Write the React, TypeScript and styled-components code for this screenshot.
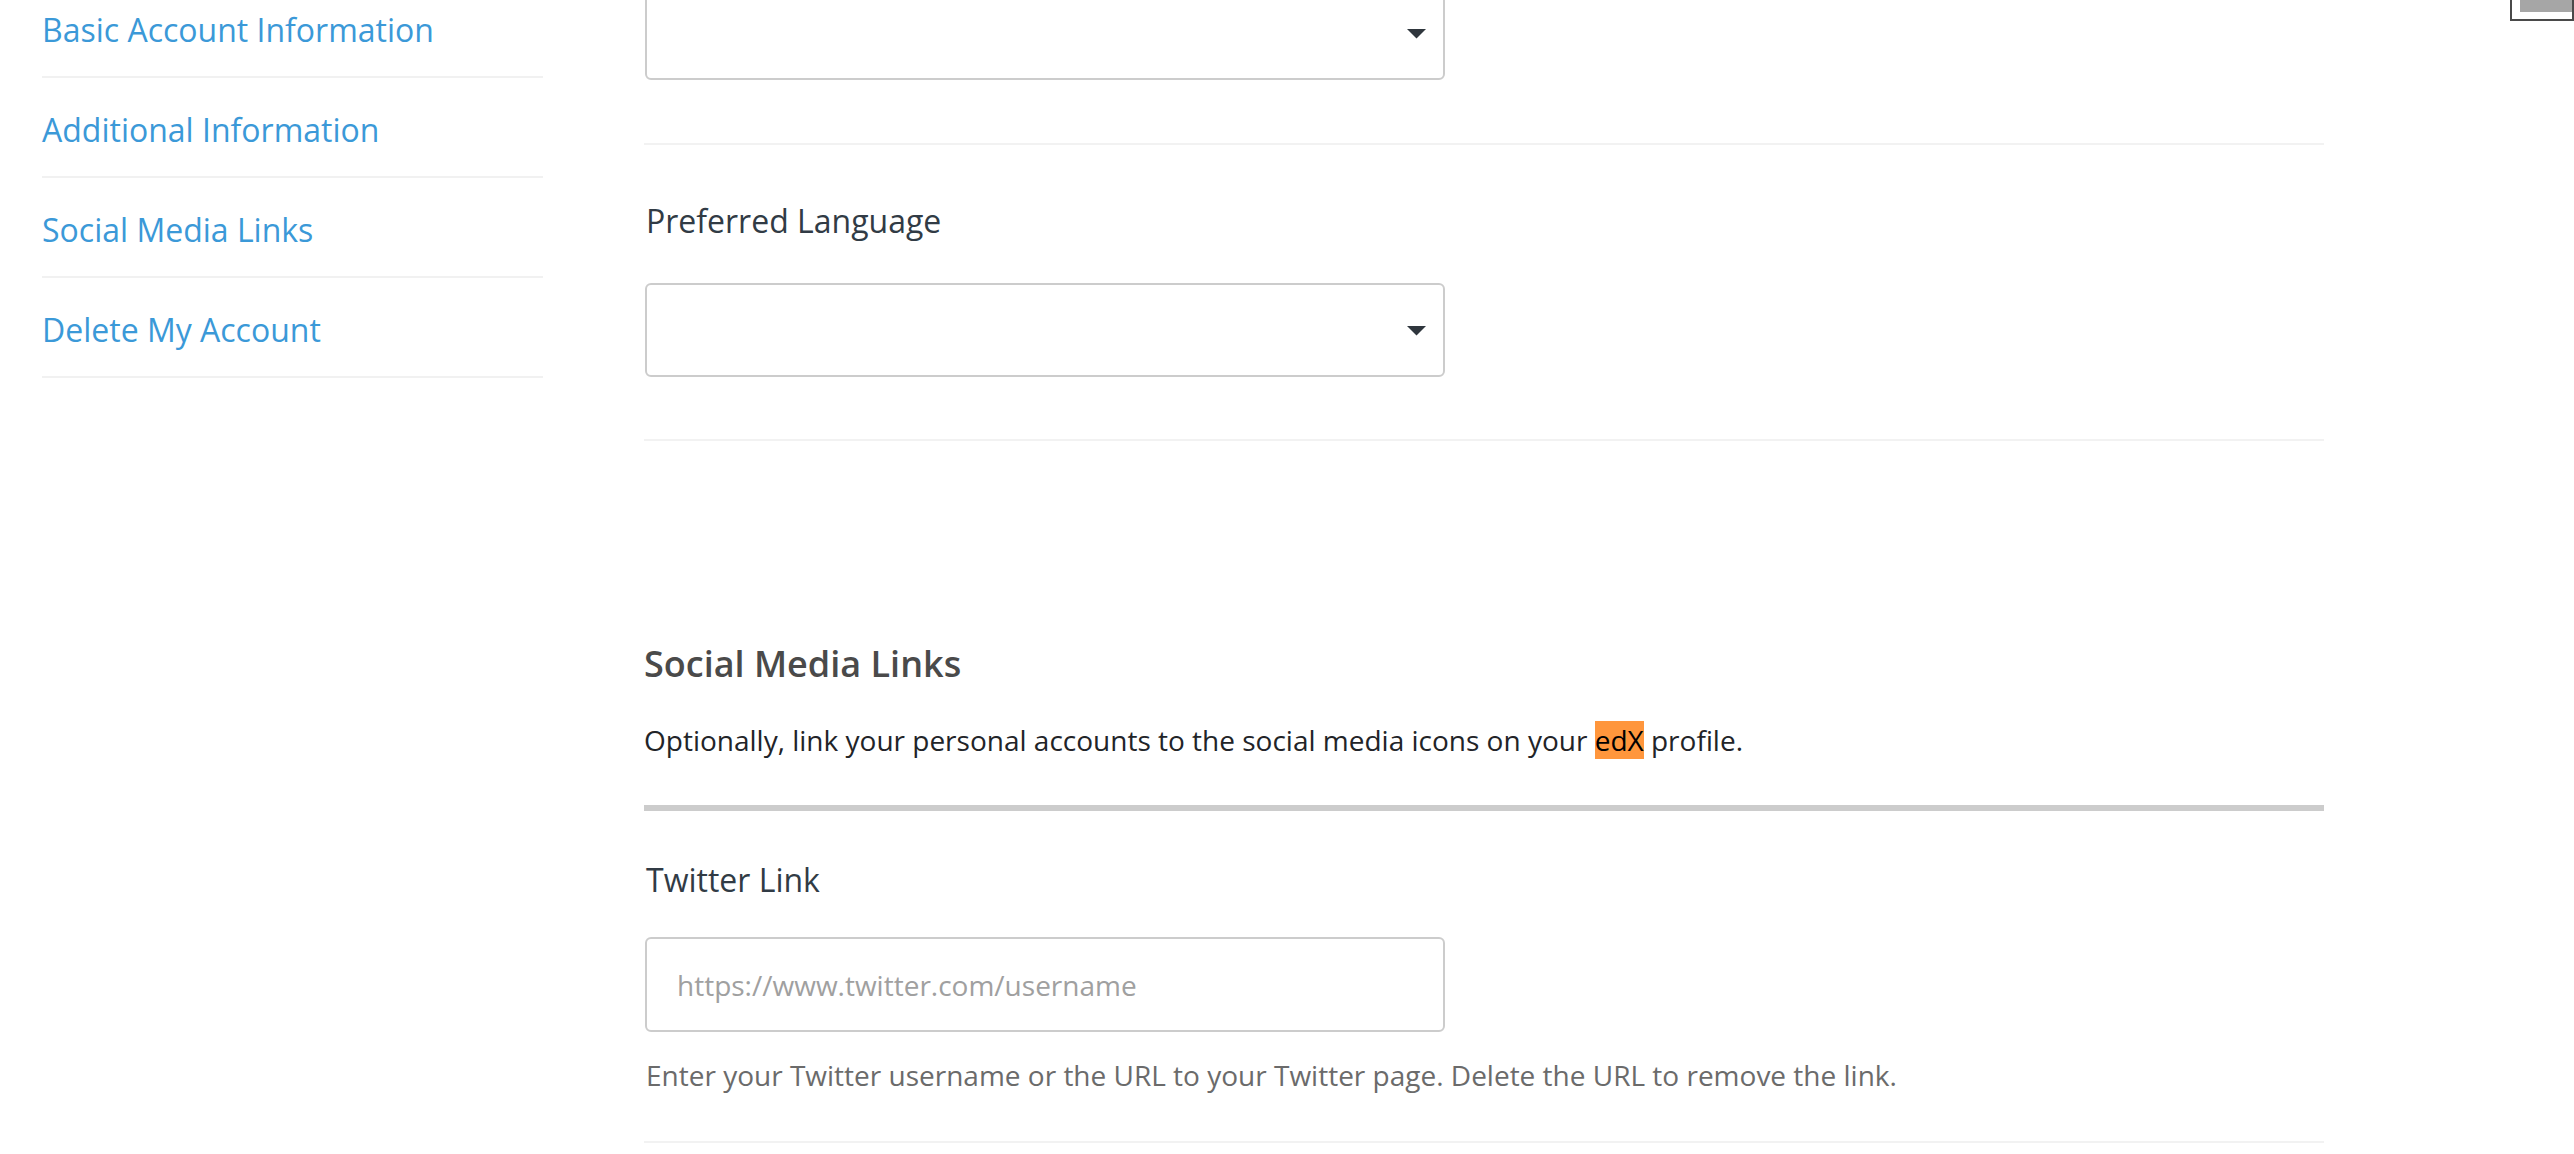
import React from "react";
import styled, { createGlobalStyle } from "styled-components";

const GlobalStyle = createGlobalStyle`
  html, body {
    margin: 0;
    padding: 0;
    background: #ffffff;
    font-family: "Open Sans", "Noto Sans", "Liberation Sans", sans-serif;
  }
  * { box-sizing: border-box; }
`;

const Viewport = styled.div`
  position: relative;
  width: 100%;
  height: 100vh;
  overflow: hidden;
`;

const Page = styled.div`
  display: flex;
  align-items: flex-start;
  gap: 101px;
  padding-left: 42px;
`;

const SideNav = styled.nav`
  width: 501px;
  flex: none;
  margin-top: -22px;
  display: flex;
  flex-direction: column;
`;

const NavItem = styled.a`
  display: block;
  padding: 28px 0 22px;
  border-bottom: 2px solid #f1f1f1;
  color: #3b99d8;
  font-size: 32px;
  line-height: 48px;
  text-decoration: none;
`;

const Main = styled.main`
  width: 1680px;
  flex: none;
  margin-top: -14px;
  display: flex;
  flex-direction: column;
`;

const Field = styled.section<{ $top: number; $bottom: number }>`
  display: flex;
  flex-direction: column;
  align-items: flex-start;
  padding: ${(p) => p.$top}px 0 ${(p) => p.$bottom}px;
  border-bottom: 2px solid #f2f2f2;
`;

const Label = styled.label<{ $gap: number }>`
  padding-left: 2px;
  margin-bottom: ${(p) => p.$gap}px;
  color: #313b45;
  font-size: 32px;
  line-height: 48px;
`;

const SelectWrap = styled.div`
  position: relative;
  width: 800px;
  margin-left: 1px;
`;

const Select = styled.select`
  display: block;
  width: 100%;
  height: 94px;
  appearance: none;
  -webkit-appearance: none;
  background: #ffffff;
  border: 2px solid #cccccc;
  border-radius: 6px;
  padding: 0 60px 0 30px;
  font-family: inherit;
  font-size: 28px;
  color: #313b45;
  outline: none;
`;

const Caret = styled.svg`
  position: absolute;
  right: 19px;
  top: 50%;
  width: 19px;
  height: 10px;
  margin-top: -4px;
  pointer-events: none;
`;

const TextInput = styled.input`
  display: block;
  width: 800px;
  height: 95px;
  margin-left: 1px;
  border: 2px solid #cccccc;
  border-radius: 6px;
  padding: 0 30px;
  font-family: inherit;
  font-size: 28px;
  color: #313b45;
  outline: none;
  &::placeholder {
    color: #a0a0a0;
  }
`;

const Help = styled.p`
  margin: 22px 0 0;
  padding-left: 2px;
  color: #6b6b6b;
  font-size: 28px;
  line-height: 42px;
`;

const SocialHeader = styled.header`
  margin-top: 202px;
  padding-bottom: 44px;
  border-bottom: 6px solid #cccccc;
`;

const SectionTitle = styled.h2`
  margin: 0 0 35px;
  color: #4a4a4a;
  font-size: 36px;
  font-weight: 600;
  line-height: 41px;
`;

const Intro = styled.p`
  margin: 0;
  color: #222428;
  font-size: 28px;
  line-height: 42px;
`;

const Brand = styled.mark`
  background: #ff963c;
  color: #000000;
`;

const CornerWidget = styled.div`
  position: absolute;
  top: -40px;
  right: 0;
  width: 64px;
  height: 61px;
  border: 2px solid #4a4a4a;
  background: #ffffff;
`;

const CornerFill = styled.div`
  position: absolute;
  left: 8px;
  right: 0;
  top: 0;
  height: 50px;
  background: #a6a6a6;
`;

const navLinks = [
  "Basic Account Information",
  "Additional Information",
  "Social Media Links",
  "Delete My Account",
];

function Dropdown() {
  return (
    <SelectWrap>
      <Select defaultValue="">
        <option value=""></option>
      </Select>
      <Caret viewBox="0 0 19 10" aria-hidden="true">
        <path d="M0 0 H19 L9.5 9.5 Z" fill="#2f363d" />
      </Caret>
    </SelectWrap>
  );
}

export default function App() {
  return (
    <>
      <GlobalStyle />
      <Viewport>
        <Page>
          <SideNav>
            {navLinks.map((t) => (
              <NavItem key={t} href="#">
                {t}
              </NavItem>
            ))}
          </SideNav>
          <Main>
            <Field $top={0} $bottom={63}>
              <Dropdown />
            </Field>
            <Field $top={52} $bottom={62}>
              <Label $gap={38}>Preferred Language</Label>
              <Dropdown />
            </Field>
            <SocialHeader>
              <SectionTitle>Social Media Links</SectionTitle>
              <Intro>
                Optionally, link your personal accounts to the social media icons on your{" "}
                <Brand>edX</Brand> profile.
              </Intro>
            </SocialHeader>
            <Field $top={45} $bottom={45}>
              <Label $gap={33}>Twitter Link</Label>
              <TextInput type="text" placeholder="https://www.twitter.com/username" />
              <Help>
                Enter your Twitter username or the URL to your Twitter page. Delete the URL to
                remove the link.
              </Help>
            </Field>
          </Main>
        </Page>
        <CornerWidget>
          <CornerFill />
        </CornerWidget>
      </Viewport>
    </>
  );
}
